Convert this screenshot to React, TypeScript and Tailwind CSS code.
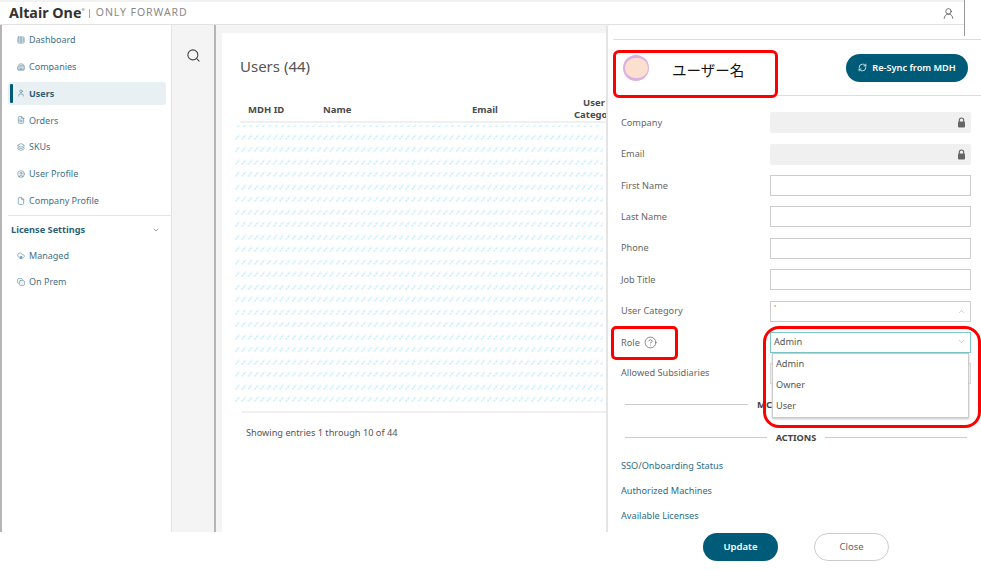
import { Building2, ChevronDown, ChevronUp, CircleHelp, CircleUser, CloudCog, Copy, File, FileText, Layers, RefreshCw, Search, Table, User, UserRound } from "lucide-react";
import type { ComponentType, ReactNode } from "react";

const font = "font-['Noto_Sans','Open_Sans',sans-serif]";

type Item = { label: string; icon: ComponentType<{ size?: number; className?: string; strokeWidth?: number }>; active?: boolean };

const topItems: Item[] = [
  { label: "Dashboard", icon: Table },
  { label: "Companies", icon: Building2 },
  { label: "Users", icon: User, active: true },
  { label: "Orders", icon: FileText },
  { label: "SKUs", icon: Layers },
  { label: "User Profile", icon: CircleUser },
  { label: "Company Profile", icon: File },
];

function NavItem({ item, h }: { item: Item; h: string }) {
  const Icon = item.icon;
  return (
    <div className={`${h} flex items-center`}>
      <div className={`flex h-[23px] w-[158px] items-center rounded-[3px] pl-[2px] ${item.active ? "bg-[#e8f0f4]" : ""}`}>
        <div className={`h-[19px] w-[3px] rounded-[1px] ${item.active ? "bg-[#005b79]" : ""}`} />
        <Icon size={8} strokeWidth={2} className="ml-[4px] text-[#5d8a9c]" />
        <span className={`ml-[4px] text-[9px] ${item.active ? "font-bold text-[#2d5f78]" : "text-[#3f7088]"}`}>{item.label}</span>
      </div>
    </div>
  );
}

function Hatch({ id }: { id: string }) {
  return (
    <svg width="368" height="6" className="block">
      <defs>
        <pattern id={id} width="6.3" height="6" patternUnits="userSpaceOnUse">
          <path d="M0.5 5.5 L4.5 0.8" stroke="#c8eefa" strokeWidth="1.6" strokeDasharray="2 0.8" fill="none" />
        </pattern>
      </defs>
      <rect width="368" height="6" fill={`url(#${id})`} />
    </svg>
  );
}

function LockIcon() {
  return (
    <svg width="9" height="11" viewBox="0 0 9 11" className="block">
      <path d="M2.3 5V3.2a2.2 2.2 0 0 1 4.4 0V5" fill="none" stroke="#666" strokeWidth="1.1" />
      <rect x="1" y="4.6" width="7" height="6" rx="0.8" fill="#666" />
    </svg>
  );
}

function Row({ label, h = "h-[31.4px]", children }: { label: ReactNode; h?: string; children?: ReactNode }) {
  return (
    <div className={`flex ${h} items-center justify-between pl-[8px] pr-[10px]`}>
      <div className="text-[9.2px] text-[#666]">{label}</div>
      {children}
    </div>
  );
}

function LockedField({ label }: { label: string }) {
  return (
    <Row label={label}>
      <div className="flex h-[21px] w-[201px] items-center justify-end rounded-[2px] bg-[#f0f0f0] pr-[5px]">
        <LockIcon />
      </div>
    </Row>
  );
}

function TextField({ label }: { label: string }) {
  return (
    <Row label={label}>
      <div className="h-[21px] w-[201px] border border-[#ccc] bg-white" />
    </Row>
  );
}

export default function App() {
  return (
    <div className={`relative h-[570px] w-[981px] overflow-hidden bg-white ${font}`}>
      <div className="h-[2px] w-[964px] bg-[#f2f2f2]" />
      <header className="flex h-[23px] w-[964px] items-center justify-between border-b border-[#e2e2e2] bg-white pl-[9px] pr-[9px]">
        <div className="flex items-center">
          <span className="text-[14.3px] font-bold leading-none text-[#333]">Altair One</span>
          <span className="mb-[6px] text-[4px] leading-none text-[#555]">®</span>
          <span className="ml-[4px] h-[9px] w-px bg-[#aaa]" />
          <span className="ml-[6px] text-[10.5px] tracking-[0.95px] text-[#8a8a8a]">ONLY FORWARD</span>
        </div>
        <UserRound size={13} strokeWidth={1.5} className="text-[#555]" />
      </header>

      <div className="flex h-[507px] border-l-2 border-[#b5b5b5]">
        <nav className="w-[170px] shrink-0 border-r border-[#e4e4e4] bg-white pl-[6px]">
          <div className="h-[1.5px]" />
          {topItems.map((item) => (
            <NavItem key={item.label} item={item} h="h-[26.8px]" />
          ))}
          <div className="mt-[1px] h-px w-[166px] bg-[#e4e4e4]" />
          <div className="flex h-[27px] w-[152px] items-center justify-between pl-[3px]">
            <span className="text-[9.2px] font-bold text-[#2d5f78]">License Settings</span>
            <ChevronDown size={8} className="text-[#777]" />
          </div>
          <NavItem item={{ label: "Managed", icon: CloudCog }} h="h-[26px]" />
          <NavItem item={{ label: "On Prem", icon: Copy }} h="h-[25px]" />
        </nav>

        <div className="flex w-[42px] shrink-0 justify-center bg-[#f4f4f4] pt-[23px]">
          <Search size={15} strokeWidth={1.75} className="text-[#444]" />
        </div>
        <div className="w-[2px] shrink-0 bg-[#b5b5b5]" />

        <main className="flex-1 bg-[#f4f4f4] pl-[6px] pt-[8px]">
          <div className="h-full bg-white pl-[18px]">
            <h1 className="pt-[22px] text-[15px] leading-[22px] text-[#555]">Users (44)</h1>
            <div className="mt-[20px] flex h-[26px] w-[366px] border-b-2 border-[#f0f0f0] text-[9.5px] font-bold text-[#4a4a4a]">
              <div className="w-[83px] shrink-0 pl-[8px] pt-[6px]">MDH ID</div>
              <div className="w-[149px] shrink-0 pt-[6px]">Name</div>
              <div className="w-[102px] shrink-0 pt-[6px]">Email</div>
              <div className="w-[40px] shrink-0 text-center leading-[12px]">
                <div>User</div>
                <div>Category</div>
              </div>
            </div>
            <div className="-ml-[5px] flex h-[288px] flex-col gap-[6.52px] overflow-hidden pt-[1px]">
              <div className="h-[3px] shrink-0 overflow-hidden">
                <Hatch id="hatch-top" />
              </div>
              {Array.from({ length: 22 }, (_, i) => (
                <Hatch key={i} id={`hatch-${i}`} />
              ))}
            </div>
            <div className="ml-[2px] h-[2px] w-[372px] bg-[#f0f0f0]" />
            <p className="pl-[6px] pt-[13px] text-[9.2px] text-[#555]">Showing entries 1 through 10 of 44</p>
          </div>
        </main>
      </div>

      {/* user drawer */}
      <aside className="absolute left-[606px] top-[25px] h-[507px] w-[375px] rounded-tl-[3px] border-l-2 border-[#e4e4e4] bg-white pl-[5px]">
        <div className="mt-[14px] h-px bg-[#ddd]" />
        <div className="flex h-[56px] items-center justify-between border-b border-[#ddd] pl-[10px] pr-[13px]">
          <div className="flex items-center">
            <div className="flex h-[26px] w-[26px] items-center justify-center rounded-full bg-[#dcb0e0]">
              <div className="h-[20px] w-[23px] rounded-full bg-[#fce0cf]" />
            </div>
            <span className="ml-[23px] mt-[5px] font-['Noto_Sans_CJK_JP',sans-serif] text-[14.5px] text-[#111]">ユーザー名</span>
          </div>
          <button className="flex h-[28px] w-[122px] items-center justify-center gap-[5px] rounded-full bg-[#005b79] text-[9.2px] font-semibold text-white">
            <RefreshCw size={9} />
            Re-Sync from MDH
          </button>
        </div>
        <div className="pt-[11px]">
          <LockedField label="Company" />
          <LockedField label="Email" />
          <TextField label="First Name" />
          <TextField label="Last Name" />
          <TextField label="Phone" />
          <TextField label="Job Title" />
          <Row label="User Category">
            <div className="flex h-[21px] w-[201px] items-center justify-between border border-[#ccc] pl-[3px] pr-[4px] text-[9px] leading-none text-[#777]">
              <span className="-mt-[6px]">'</span>
              <ChevronUp size={9} className="text-[#bbb]" />
            </div>
          </Row>
          <Row
            label={
              <span className="flex items-center gap-[4px]">
                Role <CircleHelp size={13} strokeWidth={1.25} className="text-[#555]" />
              </span>
            }
          >
            <div className="flex h-[21px] w-[201px] items-center justify-between border border-[#7cc5c8] pb-[1px] pl-[3px] pr-[4px] text-[9.2px] text-[#555]">
              Admin
              <ChevronDown size={9} className="text-[#bbb]" />
            </div>
          </Row>
          <Row label="Allowed Subsidiaries" h="h-[30px]">
            <div className="h-[21px] w-[201px] border border-[#ddd]" />
          </Row>
        </div>
        <div className="flex h-[33px] items-center pl-[12px]">
          <div className="h-px w-[123px] bg-[#ccc]" />
          <span className="ml-[9px] text-[9.5px] font-bold text-[#444]">MC</span>
        </div>
        <div className="flex h-[33px] items-center gap-[9px] pl-[12px] pr-[14px]">
          <div className="h-px flex-1 bg-[#ccc]" />
          <span className="text-[9.2px] font-bold text-[#444]">ACTIONS</span>
          <div className="h-px flex-1 bg-[#ccc]" />
        </div>
        <div className="flex flex-col gap-[10.9px] pl-[8px] pt-[5px] text-[9.2px] text-[#2d6d88]">
          <span>SSO/Onboarding Status</span>
          <span>Authorized Machines</span>
          <span>Available Licenses</span>
        </div>
      </aside>

      {/* role dropdown */}
      <div className="absolute left-[772px] top-[353px] flex h-[65px] w-[197px] flex-col justify-around border border-[#ccc] bg-white pb-[1px] pl-[3px] text-[9.2px] text-[#555] shadow-[0_1px_2px_rgba(0,0,0,0.25)]">
        <span>Admin</span>
        <span>Owner</span>
        <span>User</span>
      </div>

      <div className="absolute left-[964px] top-0 h-[36px] w-px bg-[#999]" />

      <footer className="absolute left-0 top-[532px] flex h-[38px] w-[981px] items-start gap-[36px] bg-white pl-[703px] pt-[1px] text-[9.5px]">
        <button className="h-[28px] w-[75px] rounded-full bg-[#005b79] font-semibold text-white">Update</button>
        <button className="h-[28px] w-[75px] rounded-full border border-[#ccc] bg-white text-[#666]">Close</button>
      </footer>

      {/* red annotations */}
      <div className="absolute left-[613px] top-[50px] h-[48px] w-[165px] rounded-[6px] border-[3px] border-[#f00]" />
      <div className="absolute left-[611px] top-[326px] h-[34px] w-[67px] rounded-[5px] border-[3px] border-[#f00]" />
      <div className="absolute left-[763px] top-[326px] h-[102px] w-[218px] rounded-[16px] border-[3px] border-[#f00]" />
    </div>
  );
}
